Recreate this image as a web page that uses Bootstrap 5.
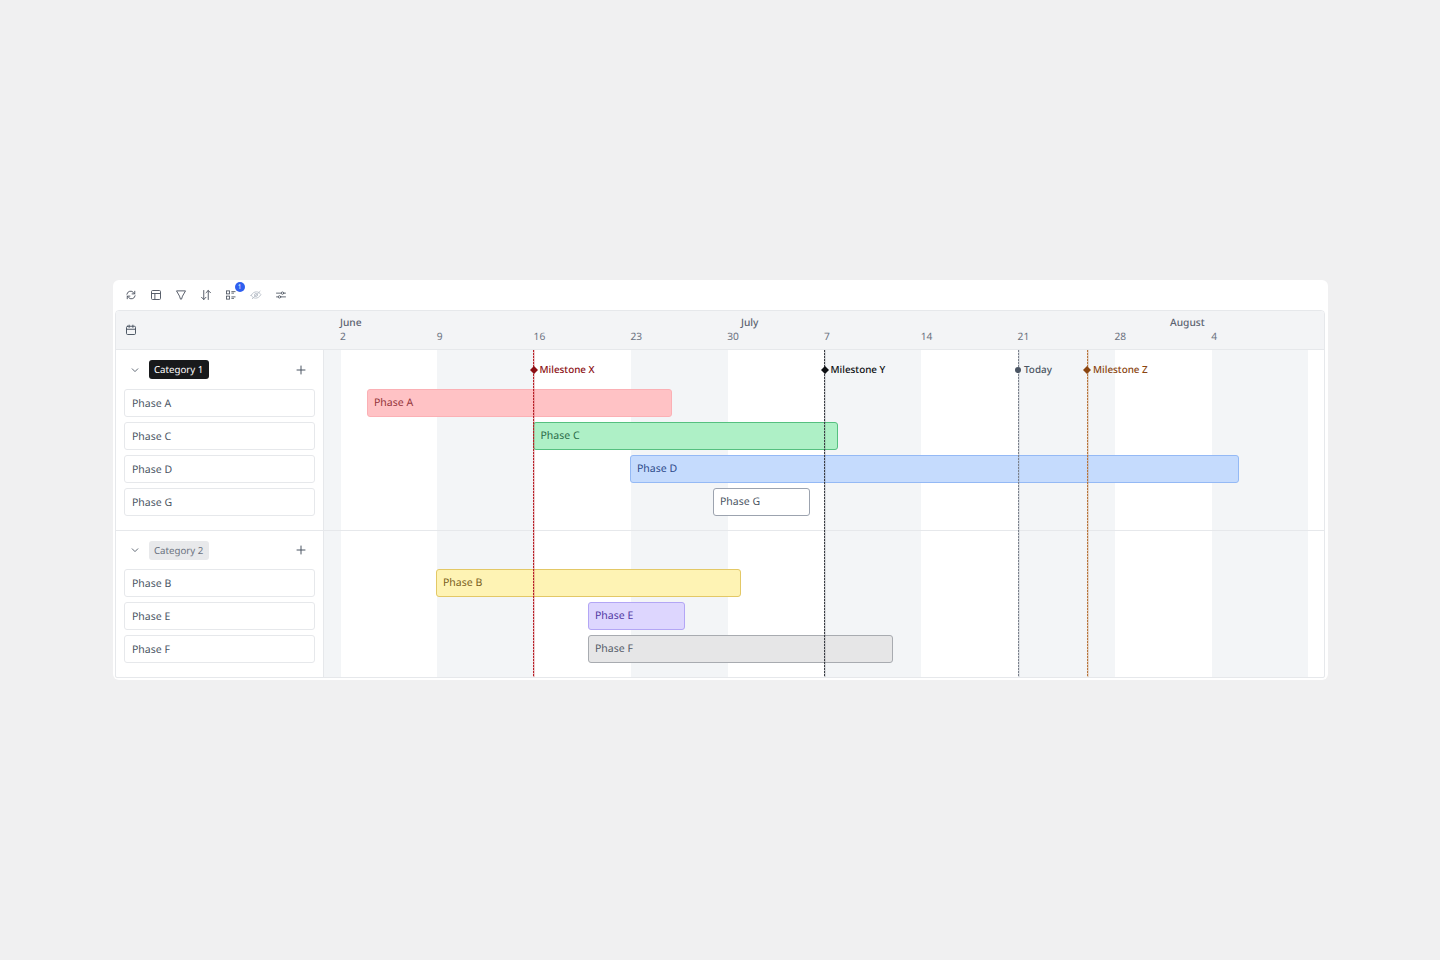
<!DOCTYPE html>
<html lang="en">
<head>
<meta charset="utf-8">
<title>Timeline</title>
<link href="https://cdn.jsdelivr.net/npm/bootstrap@5.3.0/dist/css/bootstrap.min.css" rel="stylesheet">
<style>
html,body{height:100%}
body{background:#f0f0f1;font-family:"Noto Sans","Open Sans",sans-serif;font-size:10.5px;color:#4b5563;text-rendering:geometricPrecision}
.stage{height:960px;padding-top:280px;padding-left:113px}
.shell{width:1215px;height:400px;background:#fff;border-radius:6px;padding:0 3px 2px 1.5px}
.tools{height:30px;padding-left:6px;gap:5px}
.tool{width:20px;height:20px;position:relative;color:#555c68}
.tool svg{width:12px;height:12px;display:block}
.tool-off{color:#b9bfc8}
.count{position:absolute;top:-3px;left:14px;width:10px;height:10px;border-radius:50%;background:#2f5fef;color:#fff;font-size:6.5px;line-height:10px;text-align:center}
.frame{height:368px;border:1px solid #e6e8eb;border-radius:4px 4px 2px 2px;overflow:hidden}
.head{height:39px;background:#f3f4f6;border-bottom:1px solid #e6e8eb;flex:none}
.head-side{width:208px;flex:none;padding-left:9.5px}
.head-side svg{width:12px;height:12px;color:#4b5563}
.head-time{flex:1;padding-top:3.5px;padding-left:16.5px}
.mon-row{height:15px;line-height:14.500px}
.mon{font-weight:500;color:#5b6370;font-size:10.2px;flex:none}
.day-row{height:13px;line-height:13px}
.day{color:#6b7280;font-size:10.2px;width:96.8px;flex:none}
.body-area{flex:1;min-height:0}
.side{width:208px;flex:none;border-right:1px solid #e6e8eb}
.sec-a{height:181px;border-bottom:1px solid #e6e8eb;padding:9.5px 8px 0 8px}
.sec-b{padding:9px 8px 0 8px}
.cat-a{margin-bottom:9.5px}
.cat-b{margin-bottom:9px}
.cat-line{height:20px;padding-left:7px;padding-right:3px}
.cat-line svg{width:8px;height:8px}
.chev{color:#4b5563;margin-right:10px}
.plus-ico{width:10px!important;height:10px!important;margin-right:5.5px;color:#4b5563}
.pill-dark{background:#18191b;color:#fff;border-radius:3px;padding:0 5.5px;height:19px;line-height:19px;font-size:9.7px}
.pill-soft{background:#e8e9eb;color:#6b7280;border-radius:3px;padding:0 5.5px;height:19px;line-height:19px;font-size:9.7px}
.item{height:28px;margin-bottom:5px;background:#fff;border:1px solid #e6e8eb;border-radius:3px;padding-left:7.5px;line-height:29.500px;color:#4b5563;font-size:10.5px}
.chart{position:relative;flex:1;min-width:0}
.stripes{position:absolute;inset:0;display:grid;grid-template-columns:17px repeat(10,96.8px) 1fr}
.gr{background:#f3f5f7}
.rows{position:relative;z-index:1}
.rows-a{height:181px;border-bottom:1px solid #e6e8eb;padding-top:39px}
.rows-b{padding-top:38px}
.bar{height:28px;margin-bottom:5px;border:1px solid;border-radius:3px;padding-left:6.5px;line-height:27.500px;font-size:10.5px}
.b-red{background:#ffc2c5;border-color:#fbb0b5;color:#94343b}
.b-green{background:#aef0c6;border-color:#55c07f;color:#2a6b48}
.b-blue{background:#c5dbfd;border-color:#94b9f5;color:#2d4a8a}
.b-white{background:#fff;border-color:#9ca3af;color:#4b5563}
.b-yellow{background:#fef3b4;border-color:#e3c866;color:#7a5f1c}
.b-violet{background:#ddd6fe;border-color:#b3a6f5;color:#5138a3}
.b-gray{background:#e6e6e7;border-color:#a8abb0;color:#555c68}
.vline{position:absolute;top:0;bottom:0;width:1px;z-index:2}
.l-x{background:repeating-linear-gradient(#b81f27 0 2px,rgba(184,31,39,.3) 2px 3px);box-shadow:1px 0 0 rgba(184,31,39,.22)}
.l-y{background:repeating-linear-gradient(#3a3d44 0 2px,rgba(58,61,68,.25) 2px 3px);box-shadow:1px 0 0 rgba(58,61,68,.15)}
.l-t{background:repeating-linear-gradient(#7b818c 0 2px,rgba(123,129,140,.25) 2px 3px);box-shadow:1px 0 0 rgba(123,129,140,.15)}
.l-z{background:repeating-linear-gradient(#b8743a 0 2px,rgba(184,116,58,.3) 2px 3px);box-shadow:1px 0 0 rgba(184,116,58,.22)}
.pin{position:absolute;top:13.5px;z-index:3;display:flex;align-items:center;height:12px;font-weight:500;font-size:9.9px;white-space:nowrap;gap:2px}
.pin svg{width:8px;height:8px;margin-left:-4px;flex:none}
.c-x{color:#8b0f14}.c-y{color:#0d0f12}.c-t{color:#4b5563}.c-z{color:#8a4510}
</style>
</head>
<body>
<div class="stage">
<div class="shell d-flex flex-column">
  <div class="tools d-flex align-items-center flex-none">
    <div class="tool d-flex align-items-center justify-content-center"><svg viewBox="0 0 16 16" fill="none" stroke="currentColor" stroke-width="1.3" stroke-linecap="round" stroke-linejoin="round"><path d="M2.500 7a5 5 0 0 1 9-2l1.500 1.500M13 3v3.500H9.500"/><path d="M13.500 9a5 5 0 0 1-9 2L3 9.500M3 13V9.500h3.500"/></svg></div>
    <div class="tool d-flex align-items-center justify-content-center"><svg viewBox="0 0 16 16" fill="none" stroke="currentColor" stroke-width="1.3" stroke-linejoin="round"><rect x="2" y="2" width="12" height="12" rx="1.500"/><path d="M2 6h12M6.500 6v8"/></svg></div>
    <div class="tool d-flex align-items-center justify-content-center"><svg viewBox="0 0 16 16" fill="none" stroke="currentColor" stroke-width="1.3" stroke-linejoin="round"><path d="M2 2.500h12L10 9.500 8.700 13.500H7.300L6 9.500z"/></svg></div>
    <div class="tool d-flex align-items-center justify-content-center"><svg viewBox="0 0 16 16" fill="none" stroke="currentColor" stroke-width="1.3" stroke-linecap="round" stroke-linejoin="round"><path d="M5 2v12M2 11l3 3 3-3M11 14V2M8 5l3-3 3 3"/></svg></div>
    <div class="tool d-flex align-items-center justify-content-center"><svg viewBox="0 0 16 16" fill="none" stroke="currentColor" stroke-width="1.200"><rect x="2" y="2.500" width="4" height="4"/><rect x="2" y="9.500" width="4" height="4"/><path d="M8.500 3.500H14M8.500 5.500H12M8.500 10.500H14M8.500 12.500H12"/></svg><span class="count">1</span></div>
    <div class="tool tool-off d-flex align-items-center justify-content-center"><svg viewBox="0 0 16 16" fill="none" stroke="currentColor" stroke-width="1.200" stroke-linecap="round"><path d="M1.500 8.500C3.500 5 6 3.800 8.500 3.800s4.500 1.200 6 3.700c-2 3.500-4.500 4.700-7 4.700S3 11 1.500 8.500z"/><circle cx="8" cy="8" r="2"/><path d="M3 13 13.500 3"/></svg></div>
    <div class="tool d-flex align-items-center justify-content-center"><svg viewBox="0 0 16 16" fill="none" stroke="currentColor" stroke-width="1.200" stroke-linecap="round"><path d="M2 5.500h12M2 10.500h12"/><circle cx="10" cy="5.500" r="1.600" fill="#fff"/><circle cx="6" cy="10.500" r="1.600" fill="#fff"/></svg></div>
  </div>
  <div class="frame d-flex flex-column">
    <div class="head d-flex">
      <div class="head-side d-flex align-items-center"><svg viewBox="0 0 16 16" fill="none" stroke="currentColor" stroke-width="1.300" stroke-linecap="round"><rect x="2" y="3" width="12" height="11" rx="1.500"/><path d="M2 7h12M5.500 1.500v3M10.500 1.500v3"/></svg></div>
      <div class="head-time">
        <div class="mon-row d-flex">
          <span class="mon" style="width:401px">June</span>
          <span class="mon" style="width:429px">July</span>
          <span class="mon">August</span>
        </div>
        <div class="day-row d-flex">
          <span class="day">2</span><span class="day">9</span><span class="day">16</span><span class="day">23</span><span class="day">30</span><span class="day">7</span><span class="day">14</span><span class="day">21</span><span class="day">28</span><span class="day">4</span>
        </div>
      </div>
    </div>
    <div class="body-area d-flex">
      <div class="side">
        <div class="sec-a">
          <div class="cat-line cat-a d-flex align-items-center">
            <svg class="chev" viewBox="0 0 10 10" fill="none" stroke="currentColor" stroke-width="1.100" stroke-linecap="round" stroke-linejoin="round"><path d="M1.500 3.500 5 7l3.500-3.500"/></svg>
            <span class="pill-dark">Category 1</span>
            <svg class="plus-ico ms-auto" viewBox="0 0 10 10" fill="none" stroke="currentColor" stroke-width="1" stroke-linecap="round"><path d="M5 1v8M1 5h8"/></svg>
          </div>
          <div class="item">Phase A</div><div class="item">Phase C</div><div class="item">Phase D</div><div class="item">Phase G</div>
        </div>
        <div class="sec-b">
          <div class="cat-line cat-b d-flex align-items-center">
            <svg class="chev" viewBox="0 0 10 10" fill="none" stroke="currentColor" stroke-width="1.100" stroke-linecap="round" stroke-linejoin="round"><path d="M1.500 3.500 5 7l3.500-3.500"/></svg>
            <span class="pill-soft">Category 2</span>
            <svg class="plus-ico ms-auto" viewBox="0 0 10 10" fill="none" stroke="currentColor" stroke-width="1" stroke-linecap="round"><path d="M5 1v8M1 5h8"/></svg>
          </div>
          <div class="item">Phase B</div><div class="item">Phase E</div><div class="item">Phase F</div>
        </div>
      </div>
      <div class="chart">
        <div class="stripes"><div class="gr"></div><div></div><div class="gr"></div><div></div><div class="gr"></div><div></div><div class="gr"></div><div></div><div class="gr"></div><div></div><div class="gr"></div><div></div></div>
        <div class="rows">
          <div class="rows-a">
            <div class="bar b-red" style="margin-left:43px;width:305px">Phase A</div>
            <div class="bar b-green" style="margin-left:209.500px;width:304.500px">Phase C</div>
            <div class="bar b-blue" style="margin-left:306px;width:609px">Phase D</div>
            <div class="bar b-white" style="margin-left:389px;width:97px">Phase G</div>
          </div>
          <div class="rows-b">
            <div class="bar b-yellow" style="margin-left:112px;width:305px">Phase B</div>
            <div class="bar b-violet" style="margin-left:264px;width:97px">Phase E</div>
            <div class="bar b-gray" style="margin-left:264px;width:305px">Phase F</div>
          </div>
        </div>
        <div class="vline l-x" style="left:209.500px"></div>
        <div class="vline l-y" style="left:500.500px"></div>
        <div class="vline l-t" style="left:694px"></div>
        <div class="vline l-z" style="left:763px"></div>
        <div class="pin c-x" style="left:210px"><svg viewBox="0 0 8 8"><path d="M4 0l4 4-4 4-4-4z" fill="currentColor"/></svg>Milestone X</div>
        <div class="pin c-y" style="left:501px"><svg viewBox="0 0 8 8"><path d="M4 0l4 4-4 4-4-4z" fill="currentColor"/></svg>Milestone Y</div>
        <div class="pin c-t" style="left:694.500px"><svg viewBox="0 0 8 8"><circle cx="4" cy="4" r="3" fill="currentColor"/></svg>Today</div>
        <div class="pin c-z" style="left:763.500px"><svg viewBox="0 0 8 8"><path d="M4 0l4 4-4 4-4-4z" fill="currentColor"/></svg>Milestone Z</div>
      </div>
    </div>
  </div>
</div>
</div>
<script src="https://cdn.jsdelivr.net/npm/bootstrap@5.3.0/dist/js/bootstrap.bundle.min.js"></script>
</body>
</html>
